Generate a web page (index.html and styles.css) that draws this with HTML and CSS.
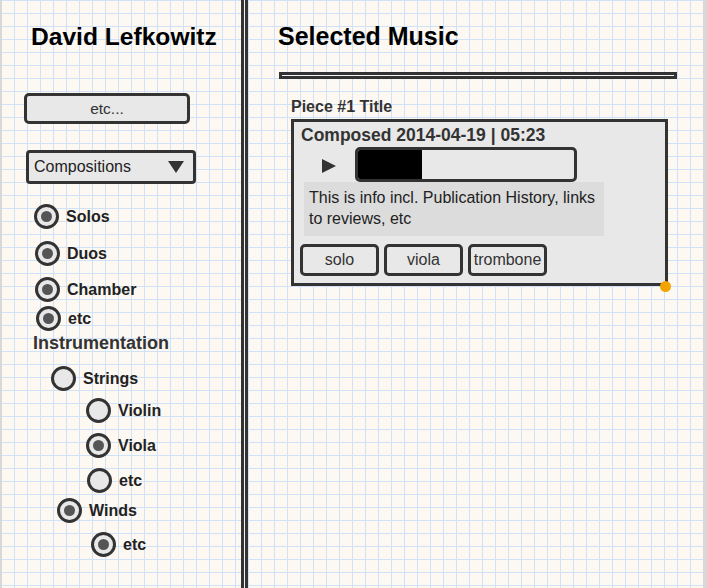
FILE: index.html
```html
<!DOCTYPE html>
<html lang="en">
<head>
<meta charset="utf-8">
<title>David Lefkowitz – Selected Music</title>
<link rel="stylesheet" href="styles.css">
</head>
<body>
<div class="page">
  <aside class="sidebar">
    <h1 class="name">David Lefkowitz</h1>
    <button class="etc-btn" type="button">etc...</button>
    <div class="select">Compositions <span class="caret"></span></div>
    <ul class="radios">
      <li class="radio on opt-solos"><span class="dot"></span>Solos</li>
      <li class="radio on opt-duos"><span class="dot"></span>Duos</li>
      <li class="radio on opt-chamber"><span class="dot"></span>Chamber</li>
      <li class="radio on opt-etc1"><span class="dot"></span>etc</li>
      <li class="heading">Instrumentation</li>
      <li class="radio opt-strings"><span class="dot"></span>Strings</li>
      <li class="radio opt-violin"><span class="dot"></span>Violin</li>
      <li class="radio on opt-viola"><span class="dot"></span>Viola</li>
      <li class="radio opt-etc2"><span class="dot"></span>etc</li>
      <li class="radio on opt-winds"><span class="dot"></span>Winds</li>
      <li class="radio on opt-etc3"><span class="dot"></span>etc</li>
    </ul>
  </aside>
  <div class="vsep"></div>
  <main class="main">
    <h2 class="title">Selected Music</h2>
    <div class="rule"></div>
    <h3 class="piece-title">Piece #1 Title</h3>
    <div class="card">
      <div class="composed">Composed 2014-04-19 | 05:23</div>
      <div class="player">
        <span class="play"></span>
        <div class="progress"><div class="bar" style="width:64px"></div></div>
      </div>
      <div class="info">This is info incl. Publication History, links to reviews, etc</div>
      <div class="tags">
        <span class="tag">solo</span>
        <span class="tag">viola</span>
        <span class="tag">trombone</span>
      </div>
      <span class="handle"></span>
    </div>
  </main>
</div>
</body>
</html>
```
FILE: styles.css
```css
* { box-sizing: border-box; }
html, body { margin: 0; padding: 0; }
body {
  width: 707px;
  height: 588px;
  overflow: hidden;
  font-family: "Liberation Sans", Arial, sans-serif;
  color: #333;
  background-color: #fef8f2;
  background-image:
    linear-gradient(to right, #cfe2f8 1px, transparent 1px),
    linear-gradient(to bottom, #cfe2f8 1px, transparent 1px);
  background-size: 13px 13px;
  background-position: 1px 0;
}
.page {
  display: flex;
  height: 588px;
  border-left: 2px solid #d8d8d8;
  border-right: 4px solid #d8d8d8;
}

/* ---------- sidebar ---------- */
.sidebar {
  width: 239px;
  flex: none;
  display: flex;
  flex-direction: column;
  align-items: flex-start;
}
.name {
  margin: 22px 0 0 29px;
  font-size: 24.6px;
  line-height: 30px;
  font-weight: bold;
  color: #000;
  white-space: nowrap;
}
.etc-btn {
  margin: 41px 0 0 22px;
  width: 166px;
  height: 31px;
  padding: 0;
  border: 3px solid #333;
  border-radius: 5px;
  background: #e8e8e8;
  font-family: inherit;
  font-size: 15.5px;
  color: #333;
}
.select {
  margin: 26px 0 0 24px;
  width: 170px;
  height: 34px;
  border: 3px solid #333;
  border-radius: 4px;
  background: #e8e8e8;
  display: flex;
  align-items: center;
  justify-content: space-between;
  padding: 0 9px 0 5px;
  font-size: 16px;
  color: #222;
}
.caret {
  width: 0;
  height: 0;
  border-left: 8px solid transparent;
  border-right: 8px solid transparent;
  border-top: 12px solid #333;
}
.radios {
  list-style: none;
  margin: 0;
  padding: 0;
  display: flex;
  flex-direction: column;
  align-items: flex-start;
}
.radio {
  display: flex;
  align-items: center;
  gap: 7px;
  height: 25px;
  font-size: 16px;
  font-weight: bold;
  color: #222;
}
.dot {
  width: 25px;
  height: 25px;
  flex: none;
  border-radius: 50%;
  border: 3px solid #333;
  background: #e8e8e8;
  position: relative;
}
.on .dot::after {
  content: "";
  position: absolute;
  left: 4px;
  top: 4px;
  width: 11px;
  height: 11px;
  border-radius: 50%;
  background: #555;
}
.heading {
  font-size: 18px;
  line-height: 20px;
  font-weight: bold;
  color: #333;
  margin: 2px 0 0 31px;
}
.opt-solos   { margin: 20px 0 0 32px; }
.opt-duos    { margin: 12px 0 0 33px; }
.opt-chamber { margin: 11px 0 0 33px; }
.opt-etc1    { margin: 4px 0 0 34px; }
.opt-strings { margin: 13px 0 0 49px; }
.opt-violin  { margin: 7px 0 0 84px; }
.opt-viola   { margin: 10px 0 0 84px; }
.opt-etc2    { margin: 10px 0 0 85px; }
.opt-winds   { margin: 5px 0 0 55px; }
.opt-etc3    { margin: 9px 0 0 89px; }

/* ---------- separator ---------- */
.vsep {
  width: 7px;
  flex: none;
  border-left: 3px solid #333;
  border-right: 3px solid #333;
  background: #f4f4f4;
}

/* ---------- main ---------- */
.main {
  flex: 1;
  display: flex;
  flex-direction: column;
  align-items: flex-start;
}
.title {
  margin: 21px 0 0 30px;
  font-size: 25px;
  line-height: 30px;
  font-weight: bold;
  color: #000;
}
.rule {
  margin: 21px 0 0 31px;
  width: 398px;
  height: 7px;
  border: 3px solid #333;
  background: #f4f4f4;
}
.piece-title {
  margin: 19px 0 0 43px;
  font-size: 16px;
  line-height: 18px;
  font-weight: bold;
  color: #333;
}
.card {
  position: relative;
  margin: 3px 0 0 43px;
  width: 377px;
  border: 3px solid #333;
  background: #e8e8e8;
  padding: 3px 0 7px 0;
}
.composed {
  margin-left: 7px;
  font-size: 17.5px;
  line-height: 20px;
  font-weight: bold;
  color: #333;
}
.player {
  display: flex;
  align-items: center;
  margin-top: 2px;
  padding-left: 28px;
}
.play {
  width: 0;
  height: 0;
  margin-top: 3px;
  margin-right: 19px;
  border-top: 7px solid transparent;
  border-bottom: 7px solid transparent;
  border-left: 14px solid #333;
}
.progress {
  width: 222px;
  height: 35px;
  border: 3px solid #333;
  border-radius: 5px;
  background: #e8e8e8;
  overflow: hidden;
}
.bar {
  height: 100%;
  background: #000;
}
.info {
  margin-left: 10px;
  width: 300px;
  background: #dcdcdc;
  padding: 5px 2px 7px 5px;
  font-size: 16px;
  line-height: 21px;
  color: #222;
}
.tags {
  display: flex;
  gap: 5px;
  margin: 8px 0 0 6px;
}
.tag {
  width: 79px;
  height: 32px;
  border: 3px solid #333;
  border-radius: 5px;
  background: #e8e8e8;
  font-size: 16px;
  color: #333;
  display: flex;
  align-items: center;
  justify-content: center;
}
.handle {
  position: absolute;
  right: -6px;
  bottom: -9px;
  width: 11px;
  height: 11px;
  border-radius: 50%;
  background: #f5a300;
}
```
